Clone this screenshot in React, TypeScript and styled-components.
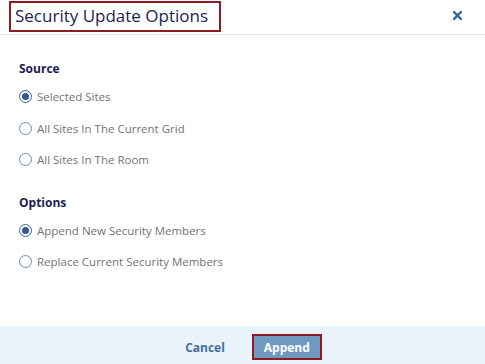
import React, { useState } from 'react';
import styled, { createGlobalStyle } from 'styled-components';

const GlobalStyle = createGlobalStyle`
   html, body {
      margin: 0;
      padding: 0;
      background: #ffffff;
   }
   * {
      box-sizing: border-box;
   }
`;

const Dialog = styled.div`
   width: 485px;
   height: 364px;
   display: flex;
   flex-direction: column;
   background: #ffffff;
   font-family: 'Open Sans', 'Liberation Sans', sans-serif;
   overflow: hidden;
`;

const Header = styled.div`
   height: 35px;
   flex: none;
   display: flex;
   align-items: flex-start;
   justify-content: space-between;
   padding: 1px 23px 0 9px;
   border-bottom: 1px solid #dfe8f1;
`;

const Title = styled.h1`
   margin: 0;
   height: 31px;
   padding: 0 11px 0 4px;
   border: 2px solid #8e1b1f;
   font-size: 17px;
   line-height: 26px;
   font-weight: 400;
   color: #1d1d52;
`;

const CloseButton = styled.button`
   border: none;
   background: none;
   padding: 0;
   margin-top: 9px;
   width: 10px;
   height: 10px;
   display: flex;
   align-items: center;
   justify-content: center;
   cursor: pointer;
`;

const Body = styled.div`
   flex: 1;
   padding: 25px 19px 0 19px;
`;

const SectionTitle = styled.div<{ $first?: boolean }>`
   margin-top: ${(p) => (p.$first ? '0' : '18px')};
   margin-bottom: 3px;
   font-size: 12px;
   line-height: 18px;
   font-weight: 700;
   color: #1d1d52;
`;

const Option = styled.label`
   height: 31.5px;
   display: flex;
   align-items: center;
   gap: 5px;
   font-size: 11.5px;
   color: #737373;
   cursor: pointer;
`;

const RadioCircle = styled.span<{ $checked: boolean }>`
   width: 13px;
   height: 13px;
   border-radius: 50%;
   border: 1.6px solid ${(p) => (p.$checked ? '#3a6496' : '#6a8cb3')};
   display: flex;
   align-items: center;
   justify-content: center;
   flex: none;

   &::after {
      content: '';
      width: 7px;
      height: 7px;
      border-radius: 50%;
      background: #2e5a90;
      display: ${(p) => (p.$checked ? 'block' : 'none')};
   }
`;

const Footer = styled.div`
   height: 38px;
   flex: none;
   display: flex;
   align-items: flex-start;
   justify-content: center;
   gap: 27px;
   padding: 8px 0 0 22px;
   background: #eaf2fa;
`;

const TextButton = styled.button`
   border: none;
   background: none;
   padding: 0;
   height: 26px;
   font-family: inherit;
   font-size: 12px;
   font-weight: 700;
   color: #42709f;
   cursor: pointer;
`;

const PrimaryButton = styled.button`
   width: 70px;
   height: 26px;
   border: 2px solid #8e1b1f;
   background: #7099c2;
   color: #ffffff;
   font-family: inherit;
   font-size: 12px;
   font-weight: 700;
   padding: 0;
   cursor: pointer;
`;

const sources = ['Selected Sites', 'All Sites In The Current Grid', 'All Sites In The Room'];
const options = ['Append New Security Members', 'Replace Current Security Members'];

export default function App() {
   const [source, setSource] = useState(0);
   const [option, setOption] = useState(0);

   return (
      <>
         <GlobalStyle />
         <Dialog>
            <Header>
               <Title>Security Update Options</Title>
               <CloseButton aria-label="Close">
                  <svg width="9" height="9" viewBox="0 0 9 9">
                     <path d="M1 1 L8 8 M8 1 L1 8" stroke="#3a649a" strokeWidth="2.4" strokeLinecap="square" />
                  </svg>
               </CloseButton>
            </Header>
            <Body>
               <SectionTitle $first>Source</SectionTitle>
               {sources.map((label, i) => (
                  <Option key={label} onClick={() => setSource(i)}>
                     <RadioCircle $checked={source === i} />
                     {label}
                  </Option>
               ))}
               <SectionTitle>Options</SectionTitle>
               {options.map((label, i) => (
                  <Option key={label} onClick={() => setOption(i)}>
                     <RadioCircle $checked={option === i} />
                     {label}
                  </Option>
               ))}
            </Body>
            <Footer>
               <TextButton>Cancel</TextButton>
               <PrimaryButton>Append</PrimaryButton>
            </Footer>
         </Dialog>
      </>
   );
}
